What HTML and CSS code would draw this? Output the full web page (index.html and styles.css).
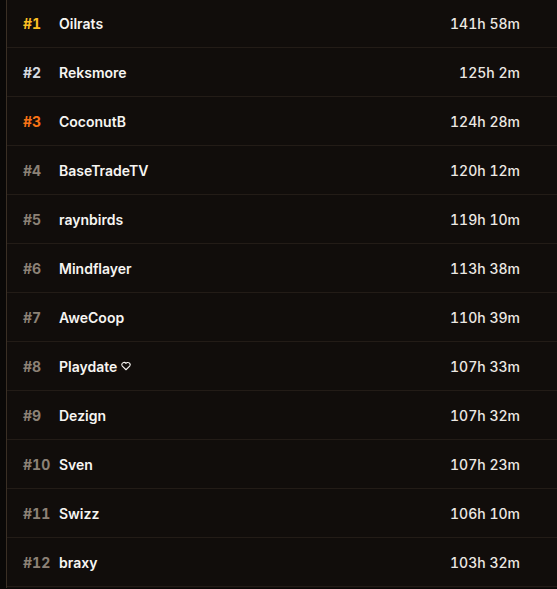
FILE: index.html
```html
<!DOCTYPE html>
<html lang="en">
<head>
    <meta charset="UTF-8">
    <meta name="viewport" content="width=device-width, initial-scale=1.0">
    <title>Leaderboard</title>
    <link rel="stylesheet" href="styles.css">
</head>
<body>
    <div class="page">
        <div class="panel">
            <ul class="board">
                <li class="row"><span class="rank rank-gold">#1</span><span class="name">Oilrats</span><span class="time">141h 58m</span></li>
                <li class="row"><span class="rank rank-silver">#2</span><span class="name">Reksmore</span><span class="time">125h 2m</span></li>
                <li class="row"><span class="rank rank-bronze">#3</span><span class="name">CoconutB</span><span class="time">124h 28m</span></li>
                <li class="row"><span class="rank">#4</span><span class="name">BaseTradeTV</span><span class="time">120h 12m</span></li>
                <li class="row"><span class="rank">#5</span><span class="name">raynbirds</span><span class="time">119h 10m</span></li>
                <li class="row"><span class="rank">#6</span><span class="name">Mindflayer</span><span class="time">113h 38m</span></li>
                <li class="row"><span class="rank">#7</span><span class="name">AweCoop</span><span class="time">110h 39m</span></li>
                <li class="row"><span class="rank">#8</span><span class="name">Playdate <svg class="heart" viewBox="0 0 12 12" width="10" height="10"><path d="M6 10.5 L1.6 6.1 A2.4 2.4 0 0 1 6 2.9 A2.4 2.4 0 0 1 10.4 6.1 Z" fill="none" stroke="currentColor" stroke-width="1.3" stroke-linejoin="round"/></svg></span><span class="time">107h 33m</span></li>
                <li class="row"><span class="rank">#9</span><span class="name">Dezign</span><span class="time">107h 32m</span></li>
                <li class="row"><span class="rank">#10</span><span class="name">Sven</span><span class="time">107h 23m</span></li>
                <li class="row"><span class="rank">#11</span><span class="name">Swizz</span><span class="time">106h 10m</span></li>
                <li class="row"><span class="rank">#12</span><span class="name">braxy</span><span class="time">103h 32m</span></li>
            </ul>
        </div>
    </div>
</body>
</html>
```

FILE: styles.css
```css
body {
    margin: 0;
    background: #0a0807;
    font-family: Inter, "Noto Sans", sans-serif;
    overflow: hidden;
}

.page {
    padding-left: 6px;
    min-height: 100vh;
}

.panel {
    background: #110d0b;
    border-left: 1px solid #3a2f25;
    min-height: 100vh;
}

.board {
    list-style: none;
    margin: -1px 0 0 0;
    padding: 0;
}

.row {
    display: flex;
    align-items: center;
    height: 48px;
    padding: 0 37px 0 16px;
    border-bottom: 1px solid #231c17;
    font-size: 14px;
}

.rank {
    width: 36px;
    font-weight: 700;
    font-variant-numeric: tabular-nums;
    color: #8c8176;
}

.rank-gold {
    color: #fbbf24;
}

.rank-silver {
    color: #d6dae0;
}

.rank-bronze {
    color: #f97316;
}

.name {
    flex-grow: 1;
    font-weight: 600;
    color: #f7f5f2;
    display: flex;
    align-items: center;
    gap: 4px;
}

.heart {
    color: #f7f5f2;
}

.time {
    font-weight: 500;
    font-variant-numeric: tabular-nums;
    color: #ece8e3;
}
```
